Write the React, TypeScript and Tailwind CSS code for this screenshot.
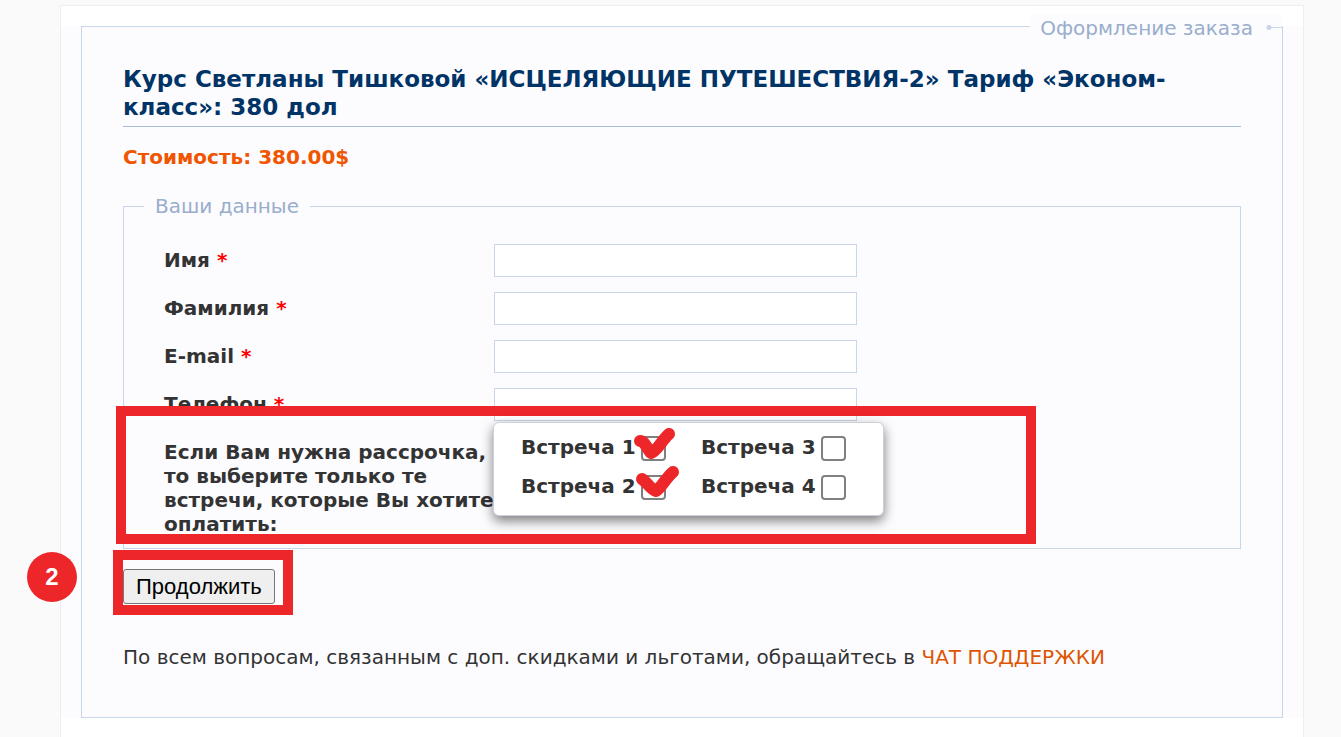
import { ReactNode } from "react";

const fields = [
  { id: "name", label: "Имя", type: "text" },
  { id: "surname", label: "Фамилия", type: "text" },
  { id: "email", label: "E-mail", type: "email" },
  { id: "phone", label: "Телефон", type: "tel" },
];

const meetings = [
  { id: "m1", label: "Встреча 1", mark: "M4 15C9 15 11 23 15 27C21 25 26 14 33 8" },
  { id: "m3", label: "Встреча 3" },
  { id: "m2", label: "Встреча 2", mark: "M6 14C11 17 14 24 20 26C26 22 29 14 37 7" },
  { id: "m4", label: "Встреча 4" },
];

const Field = ({ id, label, type }: { id: string; label: string; type: string }) => {
  return (
    <div className="mb-[15px] flex items-start">
      <label htmlFor={id} className="mt-1 w-[330px] shrink-0 font-bold">
        {label} <span className="text-[#ff0000]">*</span>
      </label>
      <input
        id={id}
        name={id}
        type={type}
        className="h-[33px] w-[363px] border border-[#c8d6e9] bg-white px-2 outline-none"
      />
    </div>
  );
};

const Meeting = ({ id, label, mark }: { id: string; label: string; mark?: string }) => {
  return (
    <div className="flex h-[39px] items-center">
      <label htmlFor={id} className="w-[120px] shrink-0 whitespace-nowrap pb-1 font-bold">
        {label}
      </label>
      <div className="relative h-[25px] w-[25px]">
        <input
          id={id}
          name={id}
          type="checkbox"
          className="block h-[25px] w-[25px] appearance-none rounded-[4px] border-2 border-[#808080] bg-white"
        />
        {mark && (
          <svg
            className="pointer-events-none absolute -left-[5px] -top-[10px] overflow-visible"
            width="42"
            height="36"
            viewBox="0 0 42 36"
            fill="none"
            stroke="#ec2629"
            strokeWidth="12"
            strokeLinecap="round"
            strokeLinejoin="round"
          >
            <path d={mark} />
          </svg>
        )}
      </div>
    </div>
  );
};

const Heading = ({ children }: { children: ReactNode }) => {
  return (
    <h1 className="border-b border-[#a9bcd6] pb-[5px] text-[23px] font-bold leading-7 text-[#003366]">
      {children}
    </h1>
  );
};

const App = () => {
  return (
    <div className="min-h-screen bg-[#fafafa] pl-[60px] pr-[37px] pt-[5px] font-['Verdana','DejaVu_Sans',sans-serif] text-[20px] leading-6 text-[#333333]">
      <main className="flow-root min-h-[732px] border border-b-0 border-[#eeeeee] bg-white">
        <form className="mt-5 flow-root bg-[#fcfcff] px-5" onSubmit={(e) => e.preventDefault()}>
          <fieldset className="-mt-3 min-w-0 border border-[#c8d6e9] px-[41px] pb-12">
            <legend className="-mr-[41px] ml-auto flex h-[25px] items-center bg-[#fcfcff] pl-[10px] pt-[2px] text-[#99adcc]">
              Оформление заказа
              <svg className="ml-[13px]" width="16" height="23" viewBox="0 0 16 23">
                <path d="M3 11.5H16" stroke="#c8d6e9" strokeWidth="1" />
                <circle cx="3" cy="11.5" r="2.5" fill="#c8d6e9" />
              </svg>
            </legend>

            <div className="pt-[26px]">
              <Heading>
                Курс Светланы Тишковой «ИСЦЕЛЯЮЩИЕ ПУТЕШЕСТВИЯ-2» Тариф «Эконом-
                <wbr />
                класс»: 380 дол
              </Heading>
              <p className="mt-[18px] font-bold text-[#f05500]">Стоимость: 380.00$</p>
            </div>

            <fieldset className="relative mt-[25px] min-w-0 border border-[#c8d6e9] pb-3 pl-10">
              <legend className="-ml-5 px-[11px] text-[#99adcc]">Ваши данные</legend>
              <div className="pt-[26px]">
                {fields.map((field) => (
                  <Field key={field.id} {...field} />
                ))}
                <div className="flex items-start">
                  <p className="mt-1 w-[330px] shrink-0 whitespace-nowrap font-bold">
                    Если Вам нужна рассрочка,
                    <br />
                    то выберите только те
                    <br />
                    встречи, которые Вы хотите
                    <br />
                    оплатить:
                  </p>
                  <div className="relative z-10 -ml-px -mt-[14px] grid h-[94px] w-[391px] grid-cols-[180px_180px] content-start rounded-md border border-[#ccd0d8] bg-white pl-[27px] pt-[6px] shadow-[0_5px_12px_rgba(0,0,0,0.5)]">
                    {meetings.map((meeting) => (
                      <Meeting key={meeting.id} {...meeting} />
                    ))}
                  </div>
                </div>
              </div>
              <div className="pointer-events-none absolute -left-2 bottom-1 h-[138px] w-[920px] border-[10px] border-[#ec2629]" />
            </fieldset>

            <div className="relative mt-5 w-fit">
              <button
                type="submit"
                className="block h-[35px] rounded-[3px] border border-[#767676] bg-[#efefef] px-3 font-['Liberation_Sans',Arial,sans-serif] text-[22px] leading-6 text-black"
              >
                Продолжить
              </button>
              <div className="pointer-events-none absolute -left-[10px] -top-[19px] h-[65px] w-[180px] border-[10px] border-[#ec2629]" />
              <span className="absolute -left-[96px] -top-[17px] flex h-[50px] w-[50px] items-center justify-center rounded-full bg-[#ec2629] font-['Liberation_Sans',Arial,sans-serif] text-[24px] font-bold text-white">
                2
              </span>
            </div>

            <p className="mt-[41px]">
              По всем вопросам, связанным с доп. скидками и льготами, обращайтесь в{" "}
              <a href="#support" className="text-[#dd5500]">
                ЧАТ ПОДДЕРЖКИ
              </a>
            </p>
          </fieldset>
        </form>
      </main>
    </div>
  );
};

export default App;
